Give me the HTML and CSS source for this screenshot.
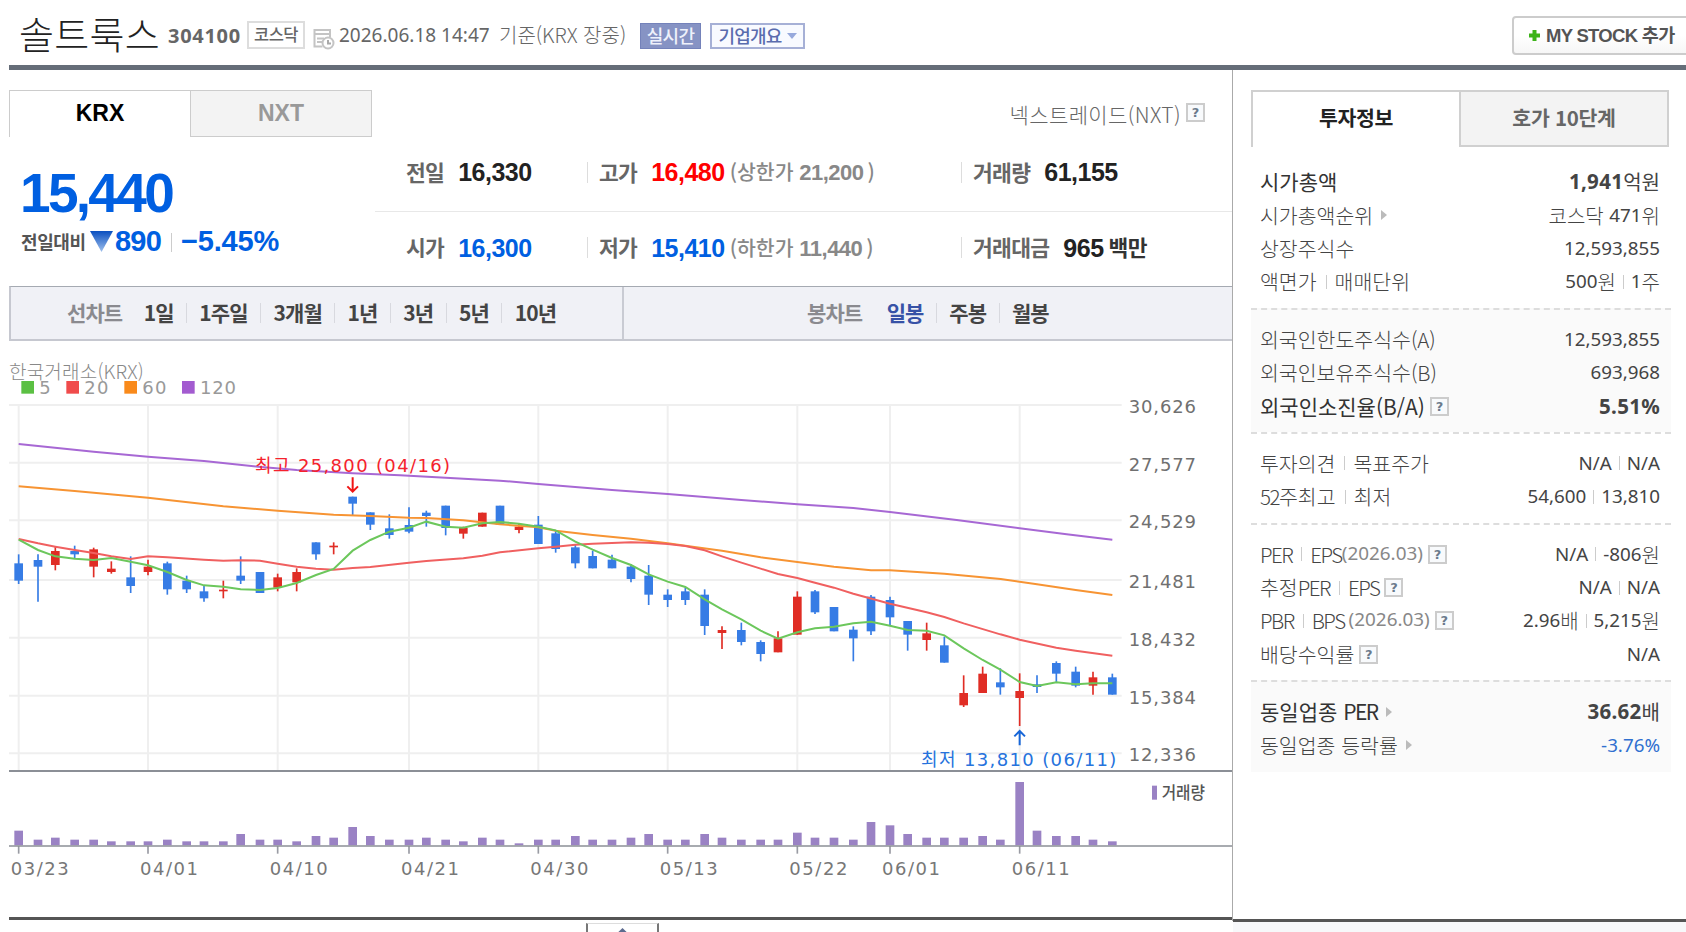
FILE: index.html
```html
<!DOCTYPE html>
<html lang="ko">
<head>
  <meta charset="UTF-8" />
  <title>솔트룩스 304100</title>
  <link rel="stylesheet" href="styles.css">
</head>
<body>

  <div class="header">
    <h1>솔트룩스</h1>
    <span class="code">304100</span>
    <span class="market">코스닥</span>
    <svg class="ico-time" width="22" height="22" viewBox="0 0 22 22" fill="none" stroke="#c4c4c4" stroke-width="2">
      <path d="M1.5 1v17.5h8M1 2h16v7M1 6h16M4 10.500h7M4 14h5" />
      <circle cx="15" cy="15" r="5.500" />
      <path d="M15 12v3.500h3" stroke="#aaa" />
    </svg>
    <span class="date">2026.06.18 14:47</span>
    <span class="base">기준(KRX 장중)</span>
    <a class="btn-live">실시간</a>
    <a class="btn-summary">기업개요<i></i></a>
    <a class="btn-mystock">
      <svg width="11" height="11" viewBox="0 0 11 11"><path d="M5.500 0v11M0 5.500h11" stroke="#3db31a" stroke-width="4" /></svg>
      MY STOCK 추가
    </a>
  </div>

  <div class="container">
    <div class="main">
      <div class="tab-row">
        <div class="tab on">KRX</div>
        <div class="tab">NXT</div>
        <div class="nxt-help">넥스트레이드(NXT)<span class="help">?</span></div>
      </div>

      <div class="rate">
        <div class="today">
          <div class="price">15,440</div>
          <div class="diff">
            <span class="diff-label">전일대비</span>
            <svg width="23" height="21" viewBox="0 0 23 21">
              <defs><linearGradient id="down" x1="0" y1="0" x2="0" y2="1"><stop offset="0" stop-color="#0a4fc0" /><stop offset="1" stop-color="#9fc0ec" /></linearGradient></defs>
              <path d="M0 0h23L11.500 21z" fill="url(#down)" />
            </svg>
            <span class="diff-num">890</span>
            <i class="bar"></i>
            <span class="diff-num pct">−5.45%</span>
          </div>
        </div>
        <div class="stats">
          <div class="stat-row">
            <div class="stat"><b>전일</b><em>16,330</em></div>
            <div class="stat line"><b>고가</b><em class="up">16,480</em><span class="limit">(상한가 <u>21,200</u>)</span></div>
            <div class="stat line"><b>거래량</b><em>61,155</em></div>
          </div>
          <div class="stat-row">
            <div class="stat"><b>시가</b><em class="down">16,300</em></div>
            <div class="stat line"><b>저가</b><em class="down">15,410</em><span class="limit">(하한가 <u>11,440</u>)</span></div>
            <div class="stat line"><b>거래대금</b><em>965</em><b class="unit">백만</b></div>
          </div>
        </div>
      </div>

      <div class="chart-tabs">
        <div class="line-tabs">
          <span class="name">선차트</span>
          <span>1일</span><span>1주일</span><span>3개월</span><span>1년</span><span>3년</span><span>5년</span><span>10년</span>
        </div>
        <div class="candle-tabs">
          <span class="name">봉차트</span>
          <span class="on">일봉</span><span>주봉</span><span>월봉</span>
        </div>
      </div>

      <div class="exchange">한국거래소(KRX)</div>
      <svg id="chart" class="chart" width="1223" height="527" viewBox="27 -30 3669 1581"></svg>
      <div class="more">
        <svg width="24" height="14" viewBox="0 0 24 14" fill="none" stroke="#5d6b8f" stroke-width="3"><path d="M2 13L12 3l10 10" /></svg>
      </div>
    </div>

    <div class="side">
      <div class="side-tabs">
        <div class="on">투자정보</div>
        <div>호가 10단계</div>
      </div>
      <div class="box">
        <div class="row strong"><span>시가총액</span><span><b>1,941</b><em>억원</em></span></div>
        <div class="row"><span>시가총액순위<i class="arr"></i></span><span><em>코스닥 </em>471<em>위</em></span></div>
        <div class="row"><span>상장주식수</span><span>12,593,855</span></div>
        <div class="row"><span>액면가<i class="bar"></i>매매단위</span><span>500<em>원</em><i class="bar"></i>1<em>주</em></span></div>
      </div>
      <div class="box gray">
        <div class="row"><span>외국인한도주식수(A)</span><span>12,593,855</span></div>
        <div class="row"><span>외국인보유주식수(B)</span><span>693,968</span></div>
        <div class="row strong"><span>외국인소진율(B/A)<i class="help">?</i></span><span><b>5.51%</b></span></div>
      </div>
      <div class="box">
        <div class="row"><span>투자의견<i class="bar"></i>목표주가</span><span>N/A<i class="bar"></i>N/A</span></div>
        <div class="row"><span><s>52</s>주최고<i class="bar"></i>최저</span><span>54,600<i class="bar"></i>13,810</span></div>
      </div>
      <div class="box">
        <div class="row"><span><s>PER</s><i class="bar"></i><s>EPS</s><small>(2026.03)</small><i class="help">?</i></span><span>N/A<i class="bar"></i>-806<em>원</em></span></div>
        <div class="row"><span>추정<s>PER</s><i class="bar"></i><s>EPS</s><i class="help">?</i></span><span>N/A<i class="bar"></i>N/A</span></div>
        <div class="row"><span><s>PBR</s><i class="bar"></i><s>BPS</s><small class="gap">(2026.03)</small><i class="help">?</i></span><span>2.96<em>배</em><i class="bar"></i>5,215<em>원</em></span></div>
        <div class="row"><span>배당수익률<i class="help">?</i></span><span>N/A</span></div>
      </div>
      <div class="box gray last">
        <div class="row strong"><span>동일업종 <s>PER</s><i class="arr"></i></span><span><b>36.62</b><em>배</em></span></div>
        <div class="row"><span>동일업종 등락률<i class="arr"></i></span><span class="minus">-3.76%</span></div>
      </div>
      <div class="side-end"></div>
    </div>
  </div>

  <script src="chart.js"></script>
</body>
</html>
```
FILE: styles.css
```css
* {
  box-sizing: border-box;
}
body {
  margin: 0;
  width: 1686px;
  height: 932px;
  overflow: hidden;
  background: #fff;
  color: #444;
  font-family: "Noto Sans", "Noto Sans CJK KR", sans-serif;
  font-size: 19px;
  line-height: 1;
}
i, em {
  font-style: normal;
}
s, u {
  text-decoration: none;
}

/* header */
.header {
  display: flex;
  align-items: center;
  height: 70px;
  margin-left: 9px;
  padding-left: 10px;
  border-bottom: 5px solid #656d78;
  white-space: nowrap;
}
h1 {
  width: 143px;
  margin: 0;
  font-size: 38px;
  font-weight: 300;
  font-family: "Noto Sans CJK KR", sans-serif;
  letter-spacing: .3px;
  color: #222;
}
.code {
  width: 79px;
  margin: 6px 0 0 6px;
  font-size: 20px;
  font-weight: bold;
  letter-spacing: .7px;
  color: #666;
}
.market {
  width: 58px;
  height: 28px;
  margin-top: 4px;
  border: 2px solid #ddd;
  font: 500 16.5px/23px "Noto Sans CJK KR", sans-serif;
  letter-spacing: -.5px;
  text-align: center;
  color: #666;
}
.ico-time {
  margin: 12px 4px 0 8px;
}
.date {
  width: 160px;
  margin-top: 5px;
  color: #666;
}
.base {
  width: 141px;
  margin-top: 4px;
  font: 300 20px/20px "Noto Sans CJK KR", sans-serif;
  letter-spacing: 0;
  color: #666;
}
.btn-live, .btn-summary {
  height: 26px;
  margin-top: 7px;
  border: 1px solid #7482ba;
  font: 500 18px/23px "Noto Sans CJK KR", sans-serif;
  letter-spacing: -.8px;
  text-align: center;
}
.btn-live {
  width: 61px;
  background: #8693c4;
  color: #eef1fb;
}
.btn-summary {
  width: 95px;
  margin-left: 9px;
  border: 2px solid #a6b0d6;
  background: #f8faff;
  line-height: 21px;
  color: #5a6cae;
}
.btn-summary i {
  display: inline-block;
  margin: 0 0 4px 5px;
  border: 5px solid transparent;
  border-top: 6px solid #97a9dc;
  border-bottom: 0;
}
.btn-mystock {
  display: flex;
  align-items: center;
  gap: 6px;
  width: 190px;
  height: 39px;
  margin: 6px -16px 0 auto;
  padding-left: 15px;
  border: 2px solid #ccc;
  border-radius: 4px;
  background: linear-gradient(#fff 50%, #f6f6f6);
  font: bold 18.5px/20px "Liberation Sans", "Noto Sans CJK KR", sans-serif;
  letter-spacing: -.7px;
  color: #555;
}

.container {
  display: flex;
}
.main {
  width: 1224px;
  height: 862px;
  margin-left: 9px;
  background: linear-gradient(#aaa, #aaa) right top / 1px 851px no-repeat;
}

/* KRX / NXT */
.tab-row {
  display: flex;
  height: 47px;
  margin-top: 20px;
}
.tab {
  width: 182px;
  border: 1px solid #ccc;
  background: #f3f3f3;
  font: bold 23px/29px "Liberation Sans", sans-serif;
  padding-top: 8px;
  text-align: center;
  color: #999;
}
.tab.on {
  width: 181px;
  border-right: 0;
  border-bottom: 0;
  background: #fff;
  color: #000;
}
.nxt-help {
  display: flex;
  align-items: center;
  margin: 0 28px 0 auto;
  font: 300 21px/20px "Noto Sans CJK KR", sans-serif;
  letter-spacing: .4px;
  color: #666;
}
.help {
  display: inline-block;
  width: 19px;
  height: 19px;
  margin-left: 5px;
  border: 2px solid #ccc;
  background: #f8fafc;
  font: bold 13px/15px "DejaVu Sans", sans-serif;
  letter-spacing: 0;
  text-align: center;
  color: #6b7a8c;
}
.nxt-help .help {
  margin-bottom: 3px;
}

/* price */
.rate {
  display: flex;
  height: 149px;
}
.today {
  width: 366px;
  padding: 28px 0 0 11px;
}
.price {
  height: 58px;
  font: bold 55px/57px "Liberation Sans", sans-serif;
  letter-spacing: -2.7px;
  color: #005fe1;
}
.diff {
  display: flex;
  align-items: center;
  height: 36px;
}
.diff-label {
  width: 69px;
  margin-left: 1px;
  font: bold 18px/20px "Noto Sans CJK KR", sans-serif;
  letter-spacing: -.4px;
  white-space: nowrap;
  color: #555;
}
.diff-num {
  margin-left: 2px;
  font: bold 29px/30px "Liberation Sans", sans-serif;
  letter-spacing: -.8px;
  color: #005fe1;
}
.diff-num.pct {
  margin-left: 9px;
  letter-spacing: -.2px;
}
.diff .bar {
  width: 1px;
  height: 19px;
  margin: 3px 0 0 10px;
  background: #ccc;
}
.stats {
  flex: 1;
  margin-right: 1px;
}
.stat-row {
  display: grid;
  grid-template-columns: 212px 374px 1fr;
  align-items: center;
  height: 75px;
  padding-bottom: 4px;
  border-bottom: 1px solid #e8e8e8;
}
.stat-row:last-child {
  border: 0;
}
.stat {
  display: flex;
  align-items: center;
  height: 21px;
  padding-left: 31px;
  white-space: nowrap;
}
.stat.line {
  padding-left: 11px;
  border-left: 1px solid #ddd;
}
.stat b {
  font: bold 21.5px/19px "Noto Sans CJK KR", sans-serif;
  letter-spacing: -.7px;
  margin-bottom: 2px;
  color: #666;
}
.stat em {
  margin-left: 14px;
  font: bold 25px/24px "Liberation Sans", sans-serif;
  letter-spacing: -.5px;
  color: #222;
}
.stat .up {
  color: #ff0000;
}
.stat .down {
  color: #005fe1;
}
.stat .unit {
  margin-left: 5px;
  color: #333;
}
.limit {
  margin-left: 5px;
  font: 500 20.5px/21px "Noto Sans CJK KR", sans-serif;
  color: #888;
}
.limit u {
  font: bold 22px/21px "Liberation Sans", sans-serif;
  letter-spacing: -.5px;
  margin-right: 4px;
}

/* chart */
.chart-tabs {
  display: flex;
  height: 55px;
  margin-right: 1px;
  border: 1px solid #c6c8d0;
  border-width: 1px 0 2px 2px;
  border-top-color: #a5aab2;
  background: #f0f1f6;
  font: bold 21px/52px "Noto Sans CJK KR", sans-serif;
  letter-spacing: -.9px;
  white-space: nowrap;
  color: #444;
}
.chart-tabs div {
  display: flex;
  align-items: center;
}
.line-tabs {
  width: 613px;
  padding-left: 56px;
  border-right: 2px solid #c9cbd3;
}
.candle-tabs {
  padding-left: 183px;
}
.chart-tabs span {
  height: 20px;
  padding: 0 12.4px;
  border-left: 1px solid #d8d9df;
  line-height: 19px;
}
.chart-tabs .name, .chart-tabs .name + span {
  border: 0;
}
.chart-tabs .name {
  padding-left: 0;
  padding-right: 9px;
  color: #8a8a8f;
}
.candle-tabs .name {
  padding-right: 12px;
}
.chart-tabs .on {
  color: #3752a6;
}
.exchange {
  height: 39px;
  padding-top: 19px;
  font: 300 19px/22px "Noto Sans CJK KR", sans-serif;
  letter-spacing: .2px;
  color: #888;
}
.chart {
  display: block;
  overflow: visible;
  font-family: "DejaVu Sans", "Noto Sans CJK KR", sans-serif;
  font-size: 54px;
}
.more {
  width: 1223px;
  height: 25px;
  margin-top: 10px;
  border-top: 3px solid #555;
}
.more svg {
  display: block;
  width: 73px;
  height: 20px;
  margin: 3px 0 0 577px;
  padding: 3px 0 0;
  border: 2px solid #777;
  border-top: 1px solid #ddd;
}

/* right panel */
.side {
  display: flex;
  flex-direction: column;
  flex: 1;
}
.side-tabs {
  display: flex;
  width: 418px;
  height: 57px;
  margin: 20px 0 18px 18px;
  font: bold 20.500px/51px "Noto Sans CJK KR", sans-serif;
  letter-spacing: -.3px;
  text-align: center;
}
.side-tabs div {
  flex: 1;
  border: 2px solid #d0d0d0;
  background: #f3f3f3;
  color: #666;
}
.side-tabs .on {
  border-right: 0;
  border-bottom: 0;
  background: #fff;
  color: #222;
}
.box {
  width: 420px;
  margin-left: 18px;
  padding: 0 11px 9px 9px;
}
.box + .box {
  padding-top: 13px;
  border-top: 2px dashed #ddd;
}
.box.gray {
  background: #fafafa;
}
.row {
  display: flex;
  justify-content: space-between;
  height: 33.4px;
  font-size: 18.8px;
  line-height: 33px;
  white-space: nowrap;
}
.row > span {
  display: flex;
  align-items: center;
  white-space: pre;
}
.row > span:first-child {
  font: 300 20.5px/33px "Noto Sans CJK KR", sans-serif;
}
.row.strong > span:first-child {
  font-size: 21px;
  font-weight: 400;
  color: #333;
}
.row.strong b {
  font-size: 20.5px;
  letter-spacing: .3px;
}
.row em {
  font: 300 20px/33px "Noto Sans CJK KR", sans-serif;
}
.row.strong em {
  font-weight: 400;
}
.row s {
  letter-spacing: -1.5px;
}
.row small {
  margin-bottom: 3px;
  font: 18.9px/30px "Noto Sans", sans-serif;
  color: #888;
}
.row .gap {
  margin-left: 4px;
}
.row .bar {
  width: 1px;
  height: 14px;
  margin: 0 8px 0 9px;
  background: #ccc;
}
.row > span:last-child .bar {
  margin: 0 7px;
}
.row .arr {
  margin-left: 8px;
  border: 5px solid transparent;
  border-left: 6px solid #bbb;
  border-right: 0;
}
.row .minus {
  color: #3070d0;
}
.box.last {
  padding-bottom: 10px;
}
.side-end {
  height: 13px;
  margin-top: auto;
  border-top: 3px solid #555;
  background: #f7f8fa;
}
```
FILE: chart.js
```js
// x, high, body top, body bottom, low, volume, color
const days = [
  [56,493,520,572,582,44,'b'], [114,493,510,530,635,17,'b'], [166,470,483,525,541,23,'r'],
  [224,467,483,493,505,17,'b'], [281,473,478,530,562,17,'r'], [334,514,536,546,551,12,'r'],
  [392,499,562,588,609,12,'b'], [444,509,530,546,556,12,'r'], [502,515,520,598,614,17,'b'],
  [560,557,572,598,609,12,'b'], [612,588,604,625,635,12,'b'], [670,572,599,604,625,12,'r'],
  [722,499,557,572,582,34,'b'], [780,546,546,609,609,17,'b'], [833,551,562,593,604,17,'r'],
  [890,535,546,577,604,12,'r'], [948,457,457,493,509,28,'b'], [1001,457,467,472,493,23,'r'],
  [1058,320,320,341,378,55,'b'], [1111,367,367,404,420,28,'b'], [1168,373,415,435,446,17,'b'],
  [1227,352,405,425,430,17,'b'], [1279,362,368,378,410,23,'b'], [1337,347,347,414,436,17,'b'],
  [1390,410,414,431,446,12,'r'], [1447,368,368,410,410,23,'r'], [1500,347,347,404,404,17,'b'],
  [1557,400,410,420,430,6,'r'], [1615,378,404,462,462,17,'b'], [1667,420,430,477,488,17,'b'],
  [1726,465,472,520,535,28,'b'], [1778,482,498,535,535,17,'b'], [1836,494,509,535,535,17,'b'],
  [1893,522,530,567,577,23,'b'], [1946,525,557,614,645,34,'b'], [2003,598,614,630,651,17,'b'],
  [2056,593,604,630,645,17,'b'], [2114,598,614,708,735,34,'b'], [2166,709,720,729,777,23,'r'],
  [2224,698,720,756,766,17,'b'], [2282,751,756,792,814,17,'b'], [2334,724,745,787,787,17,'r'],
  [2392,604,620,734,734,38,'r'], [2445,600,604,667,672,23,'b'], [2502,651,651,724,724,23,'b'],
  [2560,709,719,745,814,17,'b'], [2613,615,620,724,735,70,'b'], [2670,620,630,682,708,60,'b'],
  [2723,693,693,734,782,34,'b'], [2780,698,730,750,782,23,'r'], [2833,740,766,818,818,23,'b'],
  [2891,856,909,946,951,23,'r'], [2948,830,851,909,909,28,'r'], [3001,835,877,892,914,17,'b'],
  [3059,850,903,924,1008,190,'r'], [3111,856,883,891,909,44,'b'], [3169,814,819,851,877,28,'b'],
  [3227,830,845,887,892,28,'b'], [3279,845,862,887,914,17,'r'], [3337,851,862,914,914,12,'b']
];

const averages = [
  ['#a768d4', '56,162 281,185 444,200 612,213 775,230 890,240 1058,250 1200,256 1337,263 1500,272 1615,282 1836,300 2003,312 2224,330 2392,343 2560,354 2670,366 2870,390 3059,415 3200,433 3337,449'],
  ['#f79433', '56,289 224,303 444,323 670,349 833,362 1001,374 1111,378 1227,383 1279,384 1390,391 1500,403 1615,412 1667,422 1778,435 1893,446 2003,460 2056,467 2166,482 2282,502 2392,516 2502,530 2613,541 2670,541 2833,551 3002,567 3111,583 3227,600 3337,615'],
  ['#f06060', '56,447 114,460 166,470 224,480 281,489 334,499 392,507 444,499 502,502 612,509 670,512 722,511 780,512 833,521 890,530 948,536 1001,539 1058,534 1111,531 1227,518 1279,513 1390,505 1447,497 1500,487 1615,475 1667,470 1726,464 1778,461 1893,457 1946,458 2003,462 2056,468 2114,481 2166,499 2224,518 2282,536 2334,552 2392,564 2445,578 2502,593 2560,611 2670,641 2780,667 2833,681 2891,700 3001,733 3059,749 3169,773 3227,782 3337,797'],
  ['#6cc75c', '56,449 114,480 166,499 224,506 281,510 334,504 392,515 444,526 502,546 560,570 612,586 670,590 722,598 780,600 833,594 890,579 948,555 1001,537 1058,482 1111,450 1168,425 1227,413 1279,395 1337,410 1390,413 1447,400 1500,396 1557,401 1615,410 1667,421 1726,455 1778,479 1836,504 1893,525 1946,553 2003,575 2056,591 2114,628 2166,658 2224,688 2282,722 2334,746 2392,727 2445,715 2502,710 2560,700 2613,695 2670,707 2723,720 2780,722 2833,736 2891,775 2948,810 3001,839 3059,876 3111,888 3169,877 3227,883 3279,880 3337,880']
];

const prices = [['30,626', 45], ['27,577', 218], ['24,529', 391], ['21,481', 570], ['18,432', 743], ['15,384', 917], ['12,336', 1090]];
const dates = [['03/23', 56], ['04/01', 444], ['04/10', 833], ['04/21', 1227], ['04/30', 1615], ['05/13', 2003], ['05/22', 2392], ['06/01', 2670], ['06/11', 3059]];
const legend = [['5', 64, '#5bc043'], ['20', 199, '#f04b4b'], ['60', 373, '#f98a1b'], ['120', 546, '#a35bd0']];
const colors = { r: '#e02d25', b: '#367ce5' };

const line = (x1, y1, x2, y2, color, w) =>
  `<line x1="${x1}" y1="${y1}" x2="${x2}" y2="${y2}" stroke="${color}" stroke-width="${w}"/>`;
const rect = (x, y, w, h, color) =>
  `<rect x="${x}" y="${y}" width="${w}" height="${h}" fill="${color}"/>`;
const text = (x, y, str, color, len) =>
  `<text x="${x}" y="${y}" fill="${color}" textLength="${len}">${str}</text>`;

let out = '';

// grid
prices.forEach(([label, y]) => {
  out += line(27, y, 3365, y, '#efefef', 6);
  out += text(3386, y + 24, label, '#707070', 202);
});
dates.forEach(([label, x]) => {
  out += line(x, 45, x, 1140, '#efefef', 6);
  out += line(x, 1368, x, 1391, '#999ba3', 5);
  out += text(x - 24, 1456, label, '#777', 174);
});

legend.forEach(([label, x, color]) => {
  out += rect(x, -27, 38, 38, color);
  out += text(x + 54, 12, label, '#999', label.length * 36);
});

// candles
days.forEach(([x, high, top, bottom, low, volume, c]) => {
  out += line(x, high, x, low, colors[c], 5);
  out += rect(x - 13, top, 26, Math.max(bottom - top, 5), colors[c]);
  out += rect(x - 13, 1366 - volume, 26, volume, '#9a82c4');
});
averages.forEach(([color, points]) => {
  out += `<polyline points="${points}" fill="none" stroke="${color}" stroke-width="6"/>`;
});

out += line(27, 1143, 3696, 1143, '#8b8f96', 6);
out += line(27, 1368, 3696, 1368, '#8b8f96', 5);

// high / low marks
out += text(765, 247, '최고 25,800 (04/16)', '#f5222d', 585);
out += `<path d="M1058 262v42M1042 289l16 16 16-16" fill="none" stroke="#f01414" stroke-width="6"/>`;
out += text(2763, 1129, '최저 13,810 (06/11)', '#2673dd', 586);
out += `<path d="M3059 1066v-42M3043 1039l16-16 16 16" fill="none" stroke="#1766d8" stroke-width="6"/>`;

out += rect(3456, 1187, 15, 42, '#9a82c4');
out += `<text x="3485" y="1226" font-size="50" font-weight="500" textLength="130" lengthAdjust="spacingAndGlyphs" fill="#555">거래량</text>`;

document.getElementById('chart').innerHTML = out;
```
